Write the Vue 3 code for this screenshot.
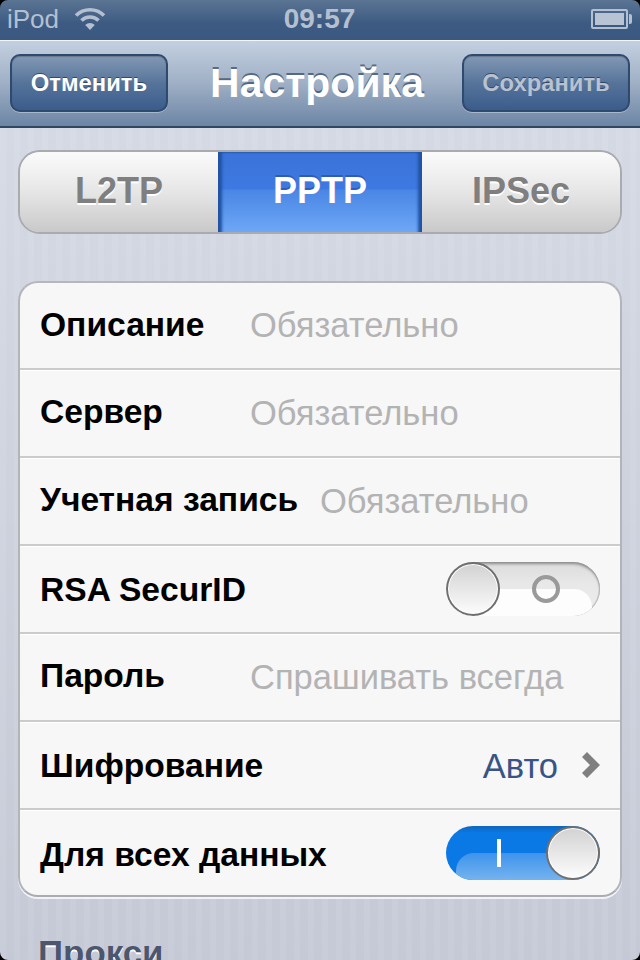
<script setup>
const rows = [
  { label: 'Описание', value: 'Обязательно', kind: 'field' },
  { label: 'Сервер', value: 'Обязательно', kind: 'field' },
  { label: 'Учетная запись', value: 'Обязательно', kind: 'field', narrow: true },
  { label: 'RSA SecurID', kind: 'off' },
  { label: 'Пароль', value: 'Спрашивать всегда', kind: 'field' },
  { label: 'Шифрование', value: 'Авто', kind: 'link' },
  { label: 'Для всех данных', kind: 'on' },
]
const segments = ['L2TP', 'PPTP', 'IPSec']
</script>

<template>
  <div class="screen">
    <header class="status">
      <div class="status-left">
        <span>iPod</span>
        <svg class="wifi" width="32" height="24" viewBox="0 0 32 24" fill="none" stroke="#b4c0d0" stroke-width="3.6">
          <path d="M2 9.5 A20 20 0 0 1 30 9.5" />
          <path d="M7.5 14.5 A12 12 0 0 1 24.500 14.500" />
          <path d="M16 24 L11.200 19 A7 7 0 0 1 20.800 19 Z" fill="#b4c0d0" stroke="none" />
        </svg>
      </div>
      <span class="clock">09:57</span>
      <div class="battery"><div class="battery-fill"></div></div>
    </header>

    <nav class="navbar">
      <button class="nav-btn cancel">Отменить</button>
      <h1>Настройка</h1>
      <button class="nav-btn save">Сохранить</button>
    </nav>

    <main class="content">
      <div class="segments">
        <div v-for="s in segments" :key="s" class="segment" :class="{ active: s === 'PPTP' }">{{ s }}</div>
      </div>

      <section class="group">
        <div v-for="r in rows" :key="r.label" class="row" :class="{ low: r.kind !== 'field' }">
          <span class="label" :class="{ narrow: r.narrow }">{{ r.label }}</span>
          <span v-if="r.kind === 'field'" class="placeholder">{{ r.value }}</span>
          <template v-else-if="r.kind === 'link'">
            <span class="link">{{ r.value }}</span>
            <svg class="chev" width="18" height="26" viewBox="0 0 18 26" fill="#7f7f7f">
              <polygon points="5,0 18,13 5,26 0,21 8,13 0,5" />
            </svg>
          </template>
          <div v-else-if="r.kind === 'off'" class="toggle off">
            <div class="knob"></div>
            <div class="ring"></div>
          </div>
          <div v-else class="toggle on">
            <div class="bar"></div>
            <div class="knob"></div>
          </div>
        </div>
      </section>

      <h2 class="section">Прокси</h2>
    </main>

    <div class="corner tl"></div>
    <div class="corner tr"></div>
    <div class="corner bl"></div>
    <div class="corner br"></div>
  </div>
</template>

<style scoped>
.screen {
  position: relative;
  width: 640px;
  height: 960px;
  overflow: hidden;
  font-family: "Liberation Sans", Arial, sans-serif;
  background: repeating-linear-gradient(90deg, rgba(255,255,255,0.035) 0 6px, rgba(0,0,0,0.008) 6px 14px),
    linear-gradient(180deg, #d9dde7 0%, #c6cbd7 100%);
}
.status {
  box-sizing: border-box;
  height: 41px;
  display: flex;
  align-items: center;
  justify-content: space-between;
  padding: 0 8px 2px 7px;
  background: linear-gradient(180deg, #5b7493 0%, #3c5a82 60%, #3b5880 100%);
  border-bottom: 1px solid #f2f5f9;
  color: #b4c0d0;
  font-size: 26px;
  font-weight: 400;
  position: relative;
}
.status-left { display: flex; align-items: center; gap: 15px; }
.wifi { margin-top: -3px; }
.clock {
  position: absolute;
  left: -1px;
  right: 0;
  text-align: center;
  font-weight: 700;
  font-size: 28px;
}
.battery {
  box-sizing: border-box;
  width: 37px;
  height: 20px;
  border: 2px solid #b4c0d0;
  border-radius: 2px;
  padding: 2px;
  position: relative;
  margin-right: 4px;
  margin-top: -1px;
}
.battery::after {
  content: "";
  position: absolute;
  right: -6px;
  top: 3px;
  width: 3px;
  height: 10px;
  background: #b4c0d0;
  border-radius: 0 2px 2px 0;
}
.battery-fill { height: 100%; background: #b8c3d3; }
.navbar {
  box-sizing: border-box;
  height: 87px;
  display: flex;
  align-items: center;
  justify-content: space-between;
  padding: 0 10px 2px;
  background: linear-gradient(180deg, #c3d0e0 0%, #9fafc5 50%, #6c85a5 100%);
  border-bottom: 2px solid #2f4560;
  position: relative;
}
.navbar h1 {
  position: absolute;
  left: -6px;
  right: 0;
  top: 19px;
  margin: 0;
  text-align: center;
  color: #fff;
  font-size: 41px;
  line-height: 46px;
  font-weight: 700;
  text-shadow: 0 -2px 0 rgba(50,70,100,0.7);
}
.nav-btn {
  box-sizing: border-box;
  height: 58px;
  border: 2px solid #2e4a6e;
  border-radius: 10px;
  background: linear-gradient(180deg, #8298b4 0%, #56749a 50%, #3b5c8c 100%);
  box-shadow: 0 1px 0 rgba(255,255,255,0.35), inset 0 1px 1px rgba(0,0,0,0.2);
  font-family: inherit;
  font-size: 23.800px;
  font-weight: 700;
  padding: 0;
  text-shadow: 0 -1px 0 rgba(30,50,80,0.7);
  position: relative;
  z-index: 1;
}
.cancel { width: 158px; color: #fff; }
.save { width: 168px; color: #b8c2d0; }
.content { padding: 22px 18px 0; }
.segments {
  box-sizing: border-box;
  height: 84px;
  display: flex;
  border: 2px solid #a9abaf;
  border-radius: 22px;
  overflow: hidden;
  margin-bottom: 47px;
}
.segment {
  flex: 0 0 198px;
  display: flex;
  align-items: center;
  justify-content: center;
  font-size: 36px;
  font-weight: 700;
  color: #7f7f7f;
  text-shadow: 0 2px 0 #fff;
  background: linear-gradient(180deg, #fbfbfb 0%, #e6e6e6 50%, #c9c9c9 100%);
  padding-bottom: 2px;
}
.segment.active {
  flex: 0 0 204px;
  margin: -2px 0;
  padding-bottom: 2px;
  color: #fff;
  text-shadow: 0 -2px 0 rgba(30,70,150,0.55);
  background: linear-gradient(180deg, #0f3f8c 0, #3a74da 4px, #3e79e2 46%, #4a86e4 48%, #6fa9f8 100%);
  box-shadow: inset 5px 0 3px -1px #2152a4, inset -5px 0 3px -1px #2152a4;
}
.segment:last-child { flex: 1; }
.group {
  box-sizing: border-box;
  height: 616px;
  background: #f7f7f7;
  border: 2px solid #b2b4b9;
  border-top-color: #b5b7bc;
  border-bottom-color: #aaacb2;
  border-radius: 20px;
  box-shadow: 0 2px 0 rgba(255,255,255,0.75);
}
.row {
  box-sizing: border-box;
  height: 88px;
  display: flex;
  align-items: center;
  padding: 0 20px 2px 20px;
  border-bottom: 2px solid #cbcbcb;
  box-shadow: inset 0 1px 0 #fff;
}
.row:first-child { height: 87px; box-shadow: none; }
.row:last-child { height: 87px; border-bottom: 0; }
.label {
  flex: 0 0 210px;
  font-size: 33.600px;
  font-weight: 700;
  color: #000;
  white-space: nowrap;
}
.label.narrow { flex-basis: 280px; }
.low .label, .low .link { padding-top: 4px; }
.placeholder { font-size: 34.500px; color: #b3b3b3; white-space: nowrap; padding-top: 2px; }
.link { margin-left: auto; font-size: 34.500px; color: #385487; }
.chev { margin-left: 24px; margin-right: 0; padding-top: 1px; }
.toggle {
  box-sizing: border-box;
  margin-left: auto;
  width: 154px;
  height: 54px;
  border-radius: 27px;
  position: relative;
  overflow: hidden;
  flex: none;
}
.toggle::before {
  content: "";
  position: absolute;
  left: 10px;
  right: 8px;
  top: 27px;
  bottom: 0;
  border-radius: 18px 18px 0 0;
}
.toggle.off {
  background: linear-gradient(180deg, #dcdcdc 0%, #e8e8e8 40%, #ececec 100%);
  box-shadow: inset 0 3px 3px -1px #8a8a8a, inset 0 -1px 1px #bbb, inset -1px 0 1px #bbb;
  margin-top: 2px;
}
.off::before { background: #fdfdfd; }
.toggle.on {
  background: linear-gradient(180deg, #0f65bd 0, #0a79e6 7px, #0a79e6 100%);
}
.on::before { background: linear-gradient(180deg, #3d93ec 0%, #75b3ef 100%); }
.knob {
  box-sizing: border-box;
  position: absolute;
  top: 0;
  width: 54px;
  height: 54px;
  border-radius: 50%;
  border: 2px solid #6f6f6f;
  background: linear-gradient(180deg, #d2d2d2 0%, #fcfcfc 100%);
  box-shadow: inset 0 0 0 1px #fff;
}
.off .knob { left: 0; }
.on .knob { right: 0; }
.ring {
  box-sizing: border-box;
  position: absolute;
  left: 86px;
  top: 13px;
  width: 28px;
  height: 28px;
  border: 4px solid #9a9a9a;
  border-radius: 50%;
}
.bar {
  position: absolute;
  left: 51px;
  top: 13px;
  width: 4px;
  height: 28px;
  background: #fff;
}
.section {
  margin: 36px 0 0 20px;
  font-size: 34.900px;
  line-height: 40px;
  font-weight: 700;
  color: #4c566e;
  text-shadow: 0 2px 0 #fff;
}
.corner { position: absolute; width: 8px; height: 8px; background: #000; }
.tl { top: 0; left: 0; clip-path: path("M0 0H8A8 8 0 0 0 0 8Z"); }
.tr { top: 0; right: 0; clip-path: path("M8 0V8A8 8 0 0 0 0 0Z"); }
.bl { bottom: 0; left: 0; clip-path: path("M0 8V0A8 8 0 0 0 8 8Z"); }
.br { bottom: 0; right: 0; clip-path: path("M8 8H0A8 8 0 0 0 8 0Z"); }
</style>
